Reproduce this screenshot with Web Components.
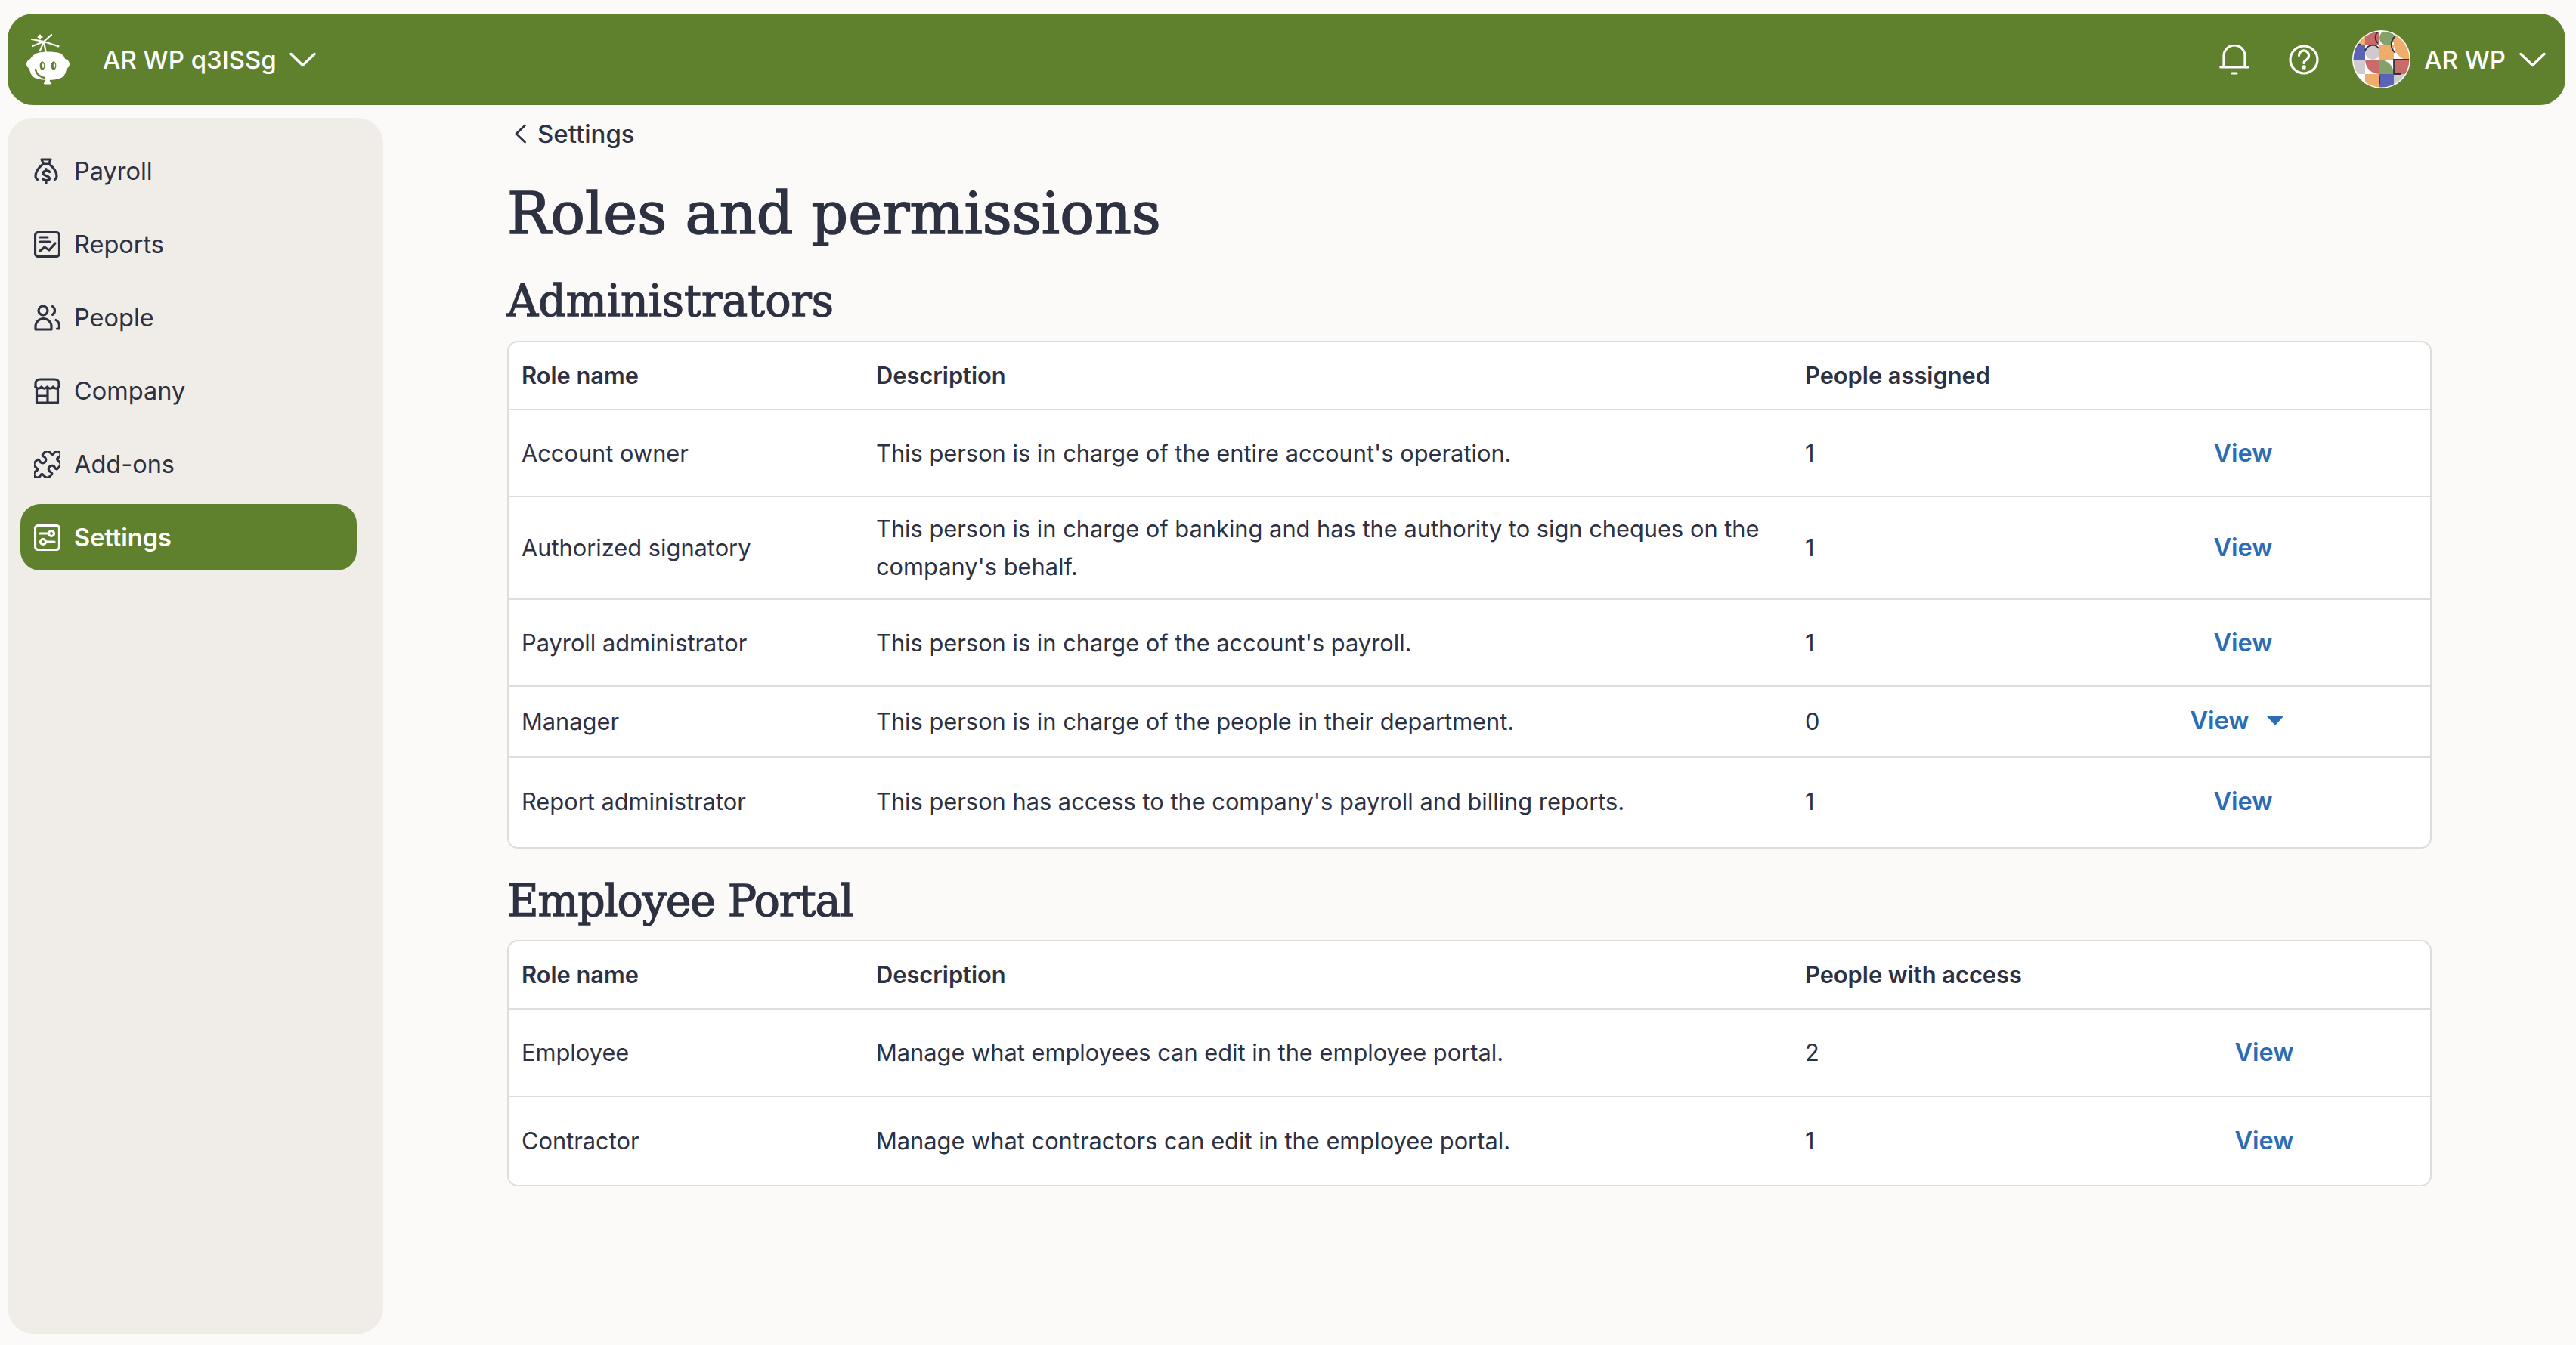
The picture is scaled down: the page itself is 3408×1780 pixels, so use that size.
<!DOCTYPE html>
<html lang="en"><head><meta charset="utf-8"><title>Roles and permissions</title>
<style>
html,body{margin:0;padding:0;background:#fbfaf8;}
body{width:3408px;height:1780px;overflow:hidden;font-family:Inter,"Liberation Sans",sans-serif;color:#2d3142;}
</style></head><body>
<app-shell>
  <top-bar slot="top"></top-bar>
  <side-nav slot="side">
    <nav-item icon="payroll">Payroll</nav-item>
    <nav-item icon="reports">Reports</nav-item>
    <nav-item icon="people">People</nav-item>
    <nav-item icon="company">Company</nav-item>
    <nav-item icon="addons">Add-ons</nav-item>
    <nav-item icon="settings" active>Settings</nav-item>
  </side-nav>
  <page-main slot="main">
    <back-link>Settings</back-link>
    <page-title>Roles and permissions</page-title>
    <section-title>Administrators</section-title>
    <role-table style="padding-bottom:2px" cols="486px 1229px 332px 495px">
      <role-row header h="90"><span>Role name</span><span>Description</span><span>People assigned</span></role-row>
      <role-row h="115"><span>Account owner</span><span>This person is in charge of the entire account's operation.</span><span>1</span><view-link></view-link></role-row>
      <role-row h="136"><span>Authorized signatory</span><span>This person is in charge of banking and has the authority to sign cheques on the company's behalf.</span><span>1</span><view-link></view-link></role-row>
      <role-row h="115"><span>Payroll administrator</span><span>This person is in charge of the account's payroll.</span><span>1</span><view-link></view-link></role-row>
      <role-row h="94"><span>Manager</span><span>This person is in charge of the people in their department.</span><span>0</span><view-link menu></view-link></role-row>
      <role-row h="116" last><span>Report administrator</span><span>This person has access to the company's payroll and billing reports.</span><span>1</span><view-link></view-link></role-row>
    </role-table>
    <section-title second>Employee Portal</section-title>
    <role-table cols="486px 1229px 388px 439px">
      <role-row header h="90"><span>Role name</span><span>Description</span><span>People with access</span></role-row>
      <role-row h="116"><span>Employee</span><span>Manage what employees can edit in the employee portal.</span><span>2</span><view-link></view-link></role-row>
      <role-row h="116" last><span>Contractor</span><span>Manage what contractors can edit in the employee portal.</span><span>1</span><view-link></view-link></role-row>
    </role-table>
  </page-main>
</app-shell>
<script>
const ICONS={
payroll:'<path d="M10 2h12l-2.500 6h-7z"/><path d="M12 8C7 12 2 17 2 24c0 2 1 3.500 2.500 4.500M20 8c5 4 10 9 10 16 0 2-1 3.500-2.500 4.500"/><path d="M20.500 18.500c-1-2-8-2.500-8.500 1.500-.4 4 8.500 3 8.500 7.300 0 3.200-7.500 3-8.700.4M16 14.500v3M16 30.500v3"/>',
reports:'<rect x="1.500" y="1.500" width="32" height="32" rx="4"/><path d="M8 8h10M8 14h13M8 26l6-5 6 4 8-9"/>',
people:'<circle cx="12" cy="8" r="6"/><path d="M2 33v-4a10.500 10.500 0 0 1 21 0v4zM24.500 2.500a6.500 6.500 0 0 1 0 11M29 20.500c2.500 1.500 4.500 4.500 4.500 8v3.500h-3"/>',
company:'<path d="M2 12V8q0-6 6-6h19q6 0 6 6v4"/><path d="M2 12q3.900 4.500 7.750 0q3.900 4.500 7.750 0q3.900 4.500 7.750 0q3.900 4.500 7.750 0"/><path d="M3.500 14v19h28V14M3.500 24H18M18 15v18"/>',
addons:'<path transform="translate(-3.500 -3.500) scale(1.75)" stroke-width="1.800" d="M19.439 7.850c-.049.322.059.648.289.878l1.568 1.568c.470.470.706 1.087.706 1.704s-.235 1.233-.706 1.704l-1.611 1.611a.980.980 0 0 1-.837.276c-.470-.070-.802-.480-.968-.925a2.501 2.501 0 1 0-3.214 3.214c.446.166.855.497.925.968a.979.979 0 0 1-.276.837l-1.610 1.610a2.404 2.404 0 0 1-1.705.707 2.402 2.402 0 0 1-1.704-.706l-1.568-1.568a1.026 1.026 0 0 0-.877-.290c-.493.074-.840.504-1.020.968a2.500 2.500 0 1 1-3.237-3.237c.464-.180.894-.527.967-1.020a1.026 1.026 0 0 0-.289-.877l-1.568-1.568A2.402 2.402 0 0 1 1.998 12c0-.617.236-1.234.706-1.704L4.230 8.770c.240-.240.581-.353.917-.303.515.077.877.528 1.073 1.010a2.500 2.500 0 1 0 3.259-3.259c-.482-.196-.933-.558-1.010-1.073-.050-.336.062-.676.303-.917l1.525-1.525A2.402 2.402 0 0 1 12 1.998c.617 0 1.234.236 1.704.706l1.568 1.568c.230.230.556.338.877.290.493-.074.840-.504 1.020-.968a2.500 2.500 0 1 1 3.237 3.237c-.464.180-.894.527-.967 1.020Z"/>',
settings:'<rect x="1.500" y="1.500" width="32" height="32" rx="4"/><circle cx="23" cy="12" r="3.500"/><circle cx="12" cy="23" r="3.500"/><path d="M8 12h11.500M15.500 23H27"/>'
};
function def(name,css,html,init){
  customElements.define(name,class extends HTMLElement{
    constructor(){super();this.attachShadow({mode:'open'});}
    connectedCallback(){
      this.shadowRoot.innerHTML='<style>'+css+'</style>'+(typeof html==='function'?html(this):html);
      init&&init(this);
    }
  });
}
def('app-shell',`:host{display:flex;flex-direction:column;padding:18px 14px 0 10px;box-sizing:border-box;height:1780px;gap:17px}
.row{display:flex;align-items:flex-start}`,
`<slot name="top"></slot><div class="row"><slot name="side"></slot><slot name="main"></slot></div>`);
const chev=`<svg width="35" height="20" viewBox="0 0 35 20" fill="none" stroke="#fff" stroke-width="3.400" stroke-linecap="round" stroke-linejoin="round"><path d="M2 2.500 17.500 17.500 33 2.500"/></svg>`;
const logo=`<svg width="57" height="67" viewBox="0 0 57 67" fill="none" aria-hidden="true">
<g stroke="#fff" stroke-width="2.200" stroke-linecap="round"><path d="M26 26 23 10M23 10 33 1M23 10 7 7M23 10 8 16M23 10 40 15.500M23 10 18 22M18 1.500v5M15.500 4h5"/></g>
<circle cx="42" cy="16" r="1.500" fill="#fff"/>
<path fill="#fff" d="M15 25C22 23 36 23 43 25 47 26 50 29 51 33 55 34 57 37 57 40 57 43 55 45 53 46 52 52 50 56 46 58 38 62 20 62 11 58 7 56 5 52 4 46 2 45 0 43 0 40 0 37 2 34 5 33 7 29 11 26 15 25Z"/>
<rect x="25" y="60" width="6" height="5" rx="2.500" fill="#fff"/><rect x="23" y="64" width="10" height="2.500" rx="1.200" fill="#fff"/>
<ellipse cx="21" cy="42" rx="3.400" ry="5.800" fill="#5f812d"/><ellipse cx="36" cy="42" rx="3.400" ry="5.800" fill="#5f812d"/>
<ellipse cx="22" cy="42" rx="1.300" ry="3" fill="#fff"/><ellipse cx="37" cy="42" rx="1.300" ry="3" fill="#fff"/>
<path d="M12 47C13 53 18 57 24 58" stroke="#5f812d" stroke-width="2.500" stroke-linecap="round"/>
</svg>`;
const bell=`<svg width="40" height="40" viewBox="0 0 40 40" fill="none" stroke="#fff" stroke-width="3.200" stroke-linecap="round"><path d="M6 30V15a14 14 0 0 1 28 0v15M1.800 30h36.400M17 38h6"/></svg>`;
const help=`<svg width="40" height="40" viewBox="0 0 40 40" fill="none" stroke="#fff" stroke-width="3.200" stroke-linecap="round"><circle cx="20" cy="20" r="18"/><path d="M13.500 14.500a6.500 6.500 0 1 1 10 5.500c-2 1.300-3.500 2-3.500 4.500"/><circle cx="20" cy="30" r="2.800" fill="#fff" stroke="none"/></svg>`;
const avatar=`<svg width="77" height="77" viewBox="0 0 77 77" aria-hidden="true"><defs><clipPath id="c"><circle cx="38.500" cy="38.500" r="37"/></clipPath></defs>
<circle cx="38.500" cy="38.500" r="38.500" fill="#fff"/>
<g clip-path="url(#c)"><rect width="77" height="77" fill="#fff"/>
<rect x="0" y="0" width="17" height="20" fill="#efac6a"/><rect x="17" y="0" width="19" height="20" fill="#c96b6b"/><circle cx="46" cy="10" r="10" fill="#83a169"/>
<path d="M55 0h22v40a22 22 0 0 1-22-20z" fill="#efac6a"/>
<rect x="0" y="20" width="17" height="19" fill="#5a63b6"/><circle cx="27" cy="29" r="10" fill="#cfcbcc"/><rect x="36" y="20" width="19" height="19" fill="#efac6a"/>
<rect x="0" y="39" width="17" height="19" fill="#cfcbcc"/><path d="M17 39h19v19a19 19 0 0 1-19-19z" fill="#c96b6b"/><path d="M36 39a19 19 0 0 1 19 19H36z" fill="#83a169"/><rect x="55" y="39" width="22" height="19" fill="#c96b6b"/>
<path d="M0 58l17 19H0z" fill="#5a63b6"/><rect x="17" y="58" width="19" height="19" fill="#efac6a"/><rect x="36" y="58" width="19" height="19" fill="#5a63b6"/><rect x="55" y="58" width="22" height="19" fill="#cfcbcc"/>
<g fill="none" stroke="#2d3142" stroke-width="1.800"><path d="M17 28a10 10 0 0 1 18-4"/><path d="M34 2a10 10 0 0 0 0 15"/><path d="M57 8a14 14 0 0 0 0 22"/><path d="M55 58V39h20"/><path d="M36 60v11"/><path d="M55 58h10"/><path d="M3 19h8"/></g></g></svg>`;
def('top-bar',`:host{display:flex;align-items:center;justify-content:space-between;height:121px;background:#5f812d;border-radius:34px;padding:0 26px 0 25px;color:#fff;font-size:33px;font-weight:500}
.g{display:flex;align-items:center}svg{display:block;flex:none}
.logo{margin-right:44px}.c1{margin-left:17px}
.b{margin-right:52px}.h{margin-right:44px}.a{margin-right:18px}.c2{margin-left:18px}`,
`<div class="g"><span class="logo">${logo}</span><span>AR WP q3ISSg</span><span class="c1">${chev}</span></div>
<div class="g"><span class="b">${bell}</span><span class="h">${help}</span><span class="a">${avatar}</span><span>AR WP</span><span class="c2">${chev}</span></div>`);
def('side-nav',`:host{display:flex;flex-direction:column;gap:9px;flex:none;width:497px;height:1609px;box-sizing:border-box;background:#f0ede8;border-radius:34px;padding:26px 35px 0 17px}`,`<slot></slot>`);
def('nav-item',`:host{display:flex;align-items:center;height:88px;padding-left:18px;gap:18px;border-radius:26px;font-size:32.500px;color:#2d3142}
:host([active]){background:#5f812d;color:#fff;font-weight:600}
svg{display:block;flex:none}`,
el=>`<svg width="35" height="35" viewBox="0 0 35 35" fill="none" stroke="currentColor" stroke-width="3.200" stroke-linecap="round" stroke-linejoin="round">${ICONS[el.getAttribute('icon')]||''}</svg><slot></slot>`);
def('page-main',`:host{display:block;flex:none;width:2546px;margin-left:164px}`,`<slot></slot>`);
def('back-link',`:host{display:flex;align-items:center;height:42px;padding-left:9px;gap:14px;font-size:33px;font-weight:500}svg{display:block}`,
`<svg width="17" height="26" viewBox="0 0 17 26" fill="none" stroke="currentColor" stroke-width="2.800" stroke-linecap="round" stroke-linejoin="round"><path d="M14.500 2 3 13l11.500 11"/></svg><slot></slot>`);
def('page-title',`:host{display:block;margin-top:37px;font:400 76px/96px "DejaVu Serif",serif;-webkit-text-stroke:1.600px currentColor}`,`<slot></slot>`);
def('section-title',`:host{display:block;margin-top:31px;margin-bottom:17px;font:400 57px/72px "DejaVu Serif",serif;-webkit-text-stroke:1.300px currentColor}:host([second]){margin-top:33px;margin-bottom:16px;letter-spacing:-1.200px}`,`<slot></slot>`);
def('role-table',`:host{display:block;background:#fff;border:2px solid #e0dcd9;border-radius:14px;overflow:hidden}`,`<slot></slot>`,
 el=>el.style.setProperty('--cols',el.getAttribute('cols')));
def('role-row',`:host{display:grid;grid-template-columns:var(--cols);align-items:center;box-sizing:border-box;border-bottom:2px solid #e0dedc;font-size:30.800px;line-height:50px}
:host([last]){border-bottom:0}
:host([header]){font-weight:600}
::slotted(span:first-child){padding-left:17px}
::slotted(span:nth-child(2)){padding-right:20px}`,`<slot></slot>`,
 el=>{el.style.height=el.getAttribute('h')+'px';});
def('view-link',`:host{display:flex;justify-content:center;align-items:center;color:#2b6cb5;font-weight:600;font-size:32.500px}
:host([menu]){padding-bottom:3px}
.m{margin-left:23px;margin-right:17px;width:0;height:0;border:11px solid transparent;border-top:12px solid #2b6cb5;border-bottom:0}`,
el=>`View${el.hasAttribute('menu')?'<i class="m"></i>':''}`);
</script>
</body></html>
